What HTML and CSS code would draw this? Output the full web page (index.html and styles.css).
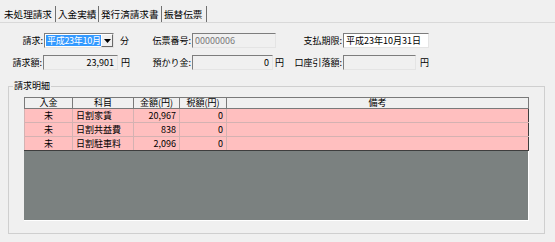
FILE: index.html
```html
<!DOCTYPE html>
<html lang="ja">
<head>
<meta charset="utf-8">
<title>未処理請求</title>
<link rel="stylesheet" href="styles.css">
</head>
<body>
<div class="tabs">
  <div class="tab t1 active">未処理請求</div>
  <div class="tab t2">入金実績</div>
  <div class="tab t3">発行済請求書</div>
  <div class="tab t4">振替伝票</div>
</div>
<div class="form">
  <div class="row">
    <span class="lbl w44">請求:</span>
    <div class="select">
      <span class="sel-text">平成23年10月</span>
      <span class="sel-btn"><svg width="7" height="4" viewBox="0 0 7 4"><path d="M0 0h7L3.5 4z" fill="#000"/></svg></span>
    </div>
    <span class="unit u6">分</span>
    <span class="lbl w62">伝票番号:</span>
    <span class="field disabled w84">00000006</span>
    <span class="lbl w67">支払期限:</span>
    <span class="field white w86">平成23年10月31日</span>
  </div>
  <div class="row">
    <span class="lbl w43">請求額:</span>
    <span class="field num w75">23,901</span>
    <span class="unit u3">円</span>
    <span class="lbl w61">預かり金:</span>
    <span class="field num w81">0</span>
    <span class="unit u2">円</span>
    <span class="lbl w58">口座引落額:</span>
    <span class="field num w73"></span>
    <span class="unit u4">円</span>
  </div>
</div>
<fieldset class="group">
  <legend>請求明細</legend>
  <div class="grid">
    <table>
      <colgroup>
        <col class="c1"><col class="c2"><col class="c3"><col class="c4"><col>
      </colgroup>
      <thead>
        <tr><th>入金</th><th>科目</th><th>金額(円)</th><th>税額(円)</th><th>備考</th></tr>
      </thead>
      <tbody>
        <tr><td class="ctr">未</td><td>日割家賃</td><td class="r">20,967</td><td class="r">0</td><td class="last"></td></tr>
        <tr><td class="ctr">未</td><td>日割共益費</td><td class="r">838</td><td class="r">0</td><td class="last"></td></tr>
        <tr class="end"><td class="ctr">未</td><td>日割駐車料</td><td class="r">2,096</td><td class="r">0</td><td class="last"></td></tr>
      </tbody>
    </table>
  </div>
</fieldset>
</body>
</html>
```
FILE: styles.css
```css
html, body {
  margin: 0;
  padding: 0;
}
body {
  width: 555px;
  height: 242px;
  overflow: hidden;
  background: #f0f0f0;
  font-family: "Noto Sans CJK JP", "Noto Sans", sans-serif;
  font-size: 9px;
  color: #000;
}

/* tabs */
.tabs {
  display: flex;
  height: 16px;
  padding-top: 6px;
  border-bottom: 1px solid #d9d9d9;
  font-size: 9.6px;
}
.tab {
  box-sizing: border-box;
  height: 16px;
  line-height: 16px;
  padding-left: 2px;
  border-right: 1px solid #707070;
  white-space: nowrap;
  overflow: hidden;
}
.t1 { width: 56px; padding-left: 4px; }
.t2 { width: 43px; }
.t3 { width: 63px; }
.t4 { width: 45px; }

/* form */
.form {
  padding-top: 10px;
}
.row {
  display: flex;
  align-items: center;
  height: 15px;
}
.row + .row {
  margin-top: 7px;
}
.lbl {
  box-sizing: border-box;
  text-align: right;
  padding-right: 1px;
  white-space: nowrap;
}
.w43 { width: 43px; }
.w44 { width: 44px; }
.w58 { width: 58px; }
.w61 { width: 61px; }
.w62 { width: 62px; }
.w67 { width: 67px; }
.w73 { width: 73px; }
.w75 { width: 75px; }
.w81 { width: 81px; }
.w84 { width: 84px; }
.w86 { width: 86px; }

.unit { width: 10px; }
.u2 { margin-left: 2px; }
.u3 { margin-left: 3px; }
.u4 { margin-left: 4px; }
.u6 { margin-left: 6px; }

.field {
  box-sizing: border-box;
  height: 15px;
  line-height: 13px;
  padding: 0 2px;
  border: 1px solid;
  border-color: #7d7d7d #e4e4e4 #e4e4e4 #7d7d7d;
  white-space: nowrap;
  overflow: hidden;
}
.field.white { background: #fff; }
.field.disabled { color: #7a7a7a; }
.field.num { text-align: right; padding-right: 3px; }

.select {
  box-sizing: border-box;
  display: flex;
  width: 70px;
  height: 15px;
  background: #fff;
  border: 1px solid;
  border-color: #7d7d7d #e4e4e4 #e4e4e4 #7d7d7d;
}
.sel-text {
  flex: none;
  width: 55px;
  margin: 1px 0 1px 1px;
  background: #3399ff;
  color: #fff;
  line-height: 11px;
  padding-left: 1px;
  letter-spacing: -0.3px;
  white-space: nowrap;
  box-sizing: border-box;
}
.sel-btn {
  flex: none;
  box-sizing: border-box;
  width: 12px;
  margin: 0 0 0 auto;
  background: #f0f0f0;
  border: 1px solid;
  border-color: #fff #6a6a6a #6a6a6a #fff;
  display: flex;
  align-items: center;
  justify-content: center;
}

/* group box */
.group {
  margin: 10px 10px 0 8px;
  padding: 5px 15px 12px 15px;
  border: 1px solid #cfcfcf;
  min-width: 0;
}
.group legend {
  padding: 0 1px;
  margin-left: -11px;
  line-height: 12px;
  font-size: 9px;
}

.grid {
  box-sizing: border-box;
  height: 124px;
  background: #7b8180;
  border-right: 1px solid #fff;
  border-bottom: 1px solid #fff;
}
table {
  width: 505px;
  table-layout: fixed;
  border-collapse: collapse;
}
.c1 { width: 48px; }
.c2 { width: 61px; }
.c3 { width: 46px; }
.c4 { width: 47px; }

th {
  height: 10px;
  padding: 0;
  line-height: 10px;
  font-weight: normal;
  background: #f0f0f0;
  border: 1px solid #7a7a7a;
  text-align: center;
}
td {
  height: 13px;
  padding: 0 3px;
  line-height: 13px;
  background: #ffbfbf;
  border: 1px solid #d4b2b2;
  white-space: nowrap;
}
td.ctr { text-align: center; }
td.r { text-align: right; }
td.last { border-right: 1px solid #3e3e3e; }
tr.end td { border-bottom: 1px solid #3e3e3e; }
```
